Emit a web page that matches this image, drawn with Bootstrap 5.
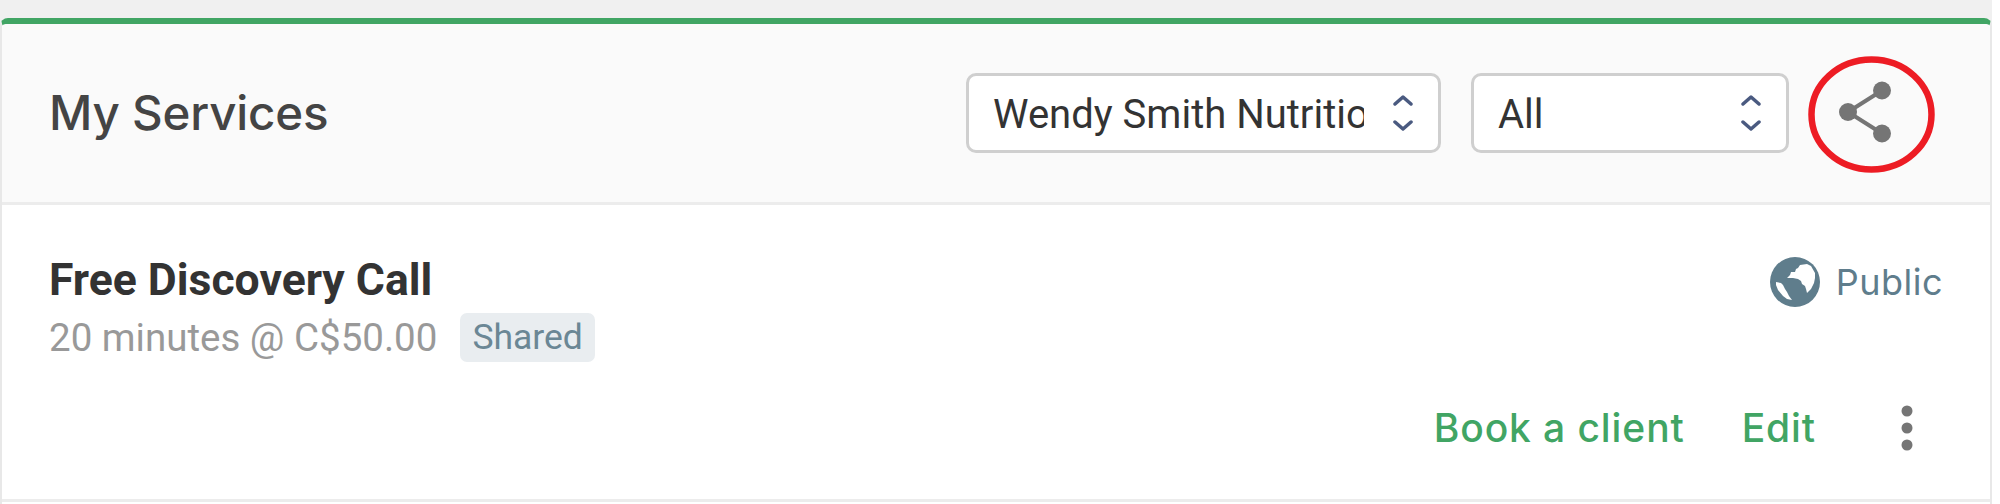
<!DOCTYPE html>
<html lang="en">
<head>
<meta charset="utf-8">
<title>My Services</title>
<link href="https://cdn.jsdelivr.net/npm/bootstrap@5.3.0/dist/css/bootstrap.min.css" rel="stylesheet">
<style>
html,body{background:#fff;font-family:Roboto,sans-serif;}
.svc-page{padding-top:18px;width:1992px;height:504px;background:#f0f0f0;}
.svc-card{border:0;border-left:2px solid #e8e8e8;border-right:2px solid #e8e8e8;border-top:6px solid #41a564;border-radius:8px 8px 0 0;background:#fff;height:486px;}
.svc-head{height:181px;background:#fafafa;border-bottom:3px solid #ececec;padding:0 0 0 47px;border-radius:0;}
.svc-title{font-family:Inter,sans-serif;font-size:47.500px;font-weight:500;color:#444;margin:0 0 2px;letter-spacing:-.2px;}
.svc-select{height:80px;border:3px solid #cfcfcf;border-radius:10px;font-family:Roboto,sans-serif;font-size:40px;color:#333;padding:4px 74px 0 24px;background-image:none;box-shadow:none;}
.svc-select-wrap{position:relative;}
.svc-select-wrap svg{position:absolute;right:28px;top:21px;pointer-events:none;}
.sel-one{width:475px;margin-right:30px;}
.sel-two{width:318px;}
.svc-share{width:127px;height:117px;position:relative;margin:2px 55px 0 19px;}
.svc-ring{position:absolute;left:0;top:0;}
.svc-row{height:297px;border-bottom:3px solid #ececec;padding:0 0 0 47px;}
.svc-name{font-family:Roboto,sans-serif;font-size:44.500px;font-weight:700;color:#333;line-height:55px;margin:0;}
.svc-meta{font-size:38.500px;color:#999;line-height:59px;}
.svc-tag{background:#e9edf0;color:#6b8795;font-weight:400;font-size:35.500px;line-height:49px;padding:0 12px;border-radius:7px;margin-left:23px;}
.svc-public{color:#5f7d8c;font-family:Inter,sans-serif;font-size:36px;letter-spacing:.5px;margin-right:47px;padding-top:2px;}
.svc-actions{padding-bottom:42px;}
.svc-link{color:#41a564;font-family:Inter,sans-serif;font-size:39px;font-weight:500;letter-spacing:.9px;text-decoration:none;}
.svc-edit{margin:0 85px 0 57px;}
.svc-dots{margin-right:77px;}
.svc-top{padding-top:48px;}
</style>
</head>
<body>
<div class="svc-page">
  <div class="card svc-card">
    <div class="card-header svc-head d-flex align-items-center justify-content-between">
      <h5 class="svc-title">My Services</h5>
      <div class="d-flex align-items-center">
        <div class="svc-select-wrap sel-one">
          <select class="form-select svc-select"><option>Wendy Smith Nutrition</option></select>
          <svg width="20" height="38" viewBox="0 0 20 38" fill="none" stroke="#4a5a80" stroke-width="3.500" stroke-linecap="round" stroke-linejoin="round"><path d="M2 10l8-7 8 7M2 28l8 7 8-7"/></svg>
        </div>
        <div class="svc-select-wrap sel-two">
          <select class="form-select svc-select"><option>All</option></select>
          <svg width="20" height="38" viewBox="0 0 20 38" fill="none" stroke="#4a5a80" stroke-width="3.500" stroke-linecap="round" stroke-linejoin="round"><path d="M2 10l8-7 8 7M2 28l8 7 8-7"/></svg>
        </div>
        <div class="svc-share">
          <svg class="svc-ring" width="127" height="117" viewBox="0 0 127 117" fill="none" aria-hidden="true">
            <ellipse cx="63.500" cy="58.500" rx="60" ry="55" stroke="#ed1c24" stroke-width="6.500"/>
            <path d="M40 56 74 34.500M40 56l34 21.500" stroke="#757575" stroke-width="4"/>
            <g fill="#757575"><circle cx="74" cy="34.500" r="9"/><circle cx="40" cy="56" r="9"/><circle cx="74" cy="77.500" r="9"/></g>
          </svg>
        </div>
      </div>
    </div>
    <div class="svc-row d-flex flex-column justify-content-between">
      <div class="d-flex justify-content-between align-items-start svc-top">
        <div>
          <p class="svc-name">Free Discovery Call</p>
          <div class="svc-meta d-flex align-items-center">20 minutes @ C$50.00<span class="badge svc-tag">Shared</span></div>
        </div>
        <div class="svc-public d-flex align-items-center gap-3">
          <svg width="50" height="50" viewBox="0 0 50 50" aria-hidden="true"><circle cx="25" cy="25" r="25" fill="#5f7d8c"/><path d="M30 8l-2 3-2 1-1 3h-4l-1 3-3 3h6l5 1 3 2 1 3 3 2 1 3 1 4 4-4 3-6 1-5 0-5-4-7-4-2zM6 25l5 1 2 2 2 4 2 3 2 4 3 4-5-1-4-3-5-6-2-5z" fill="#fff"/></svg>
          <span>Public</span>
        </div>
      </div>
      <div class="d-flex justify-content-end align-items-center svc-actions">
        <a class="svc-link" href="#">Book a client</a>
        <a class="svc-link svc-edit" href="#">Edit</a>
        <svg class="svc-dots" width="12" height="46" viewBox="0 0 12 46" aria-hidden="true" fill="#757575"><circle cx="6" cy="6" r="5.500"/><circle cx="6" cy="23" r="5.500"/><circle cx="6" cy="40" r="5.500"/></svg>
      </div>
    </div>
  </div>
</div>
<script src="https://cdn.jsdelivr.net/npm/bootstrap@5.3.0/dist/js/bootstrap.bundle.min.js"></script>
</body>
</html>
